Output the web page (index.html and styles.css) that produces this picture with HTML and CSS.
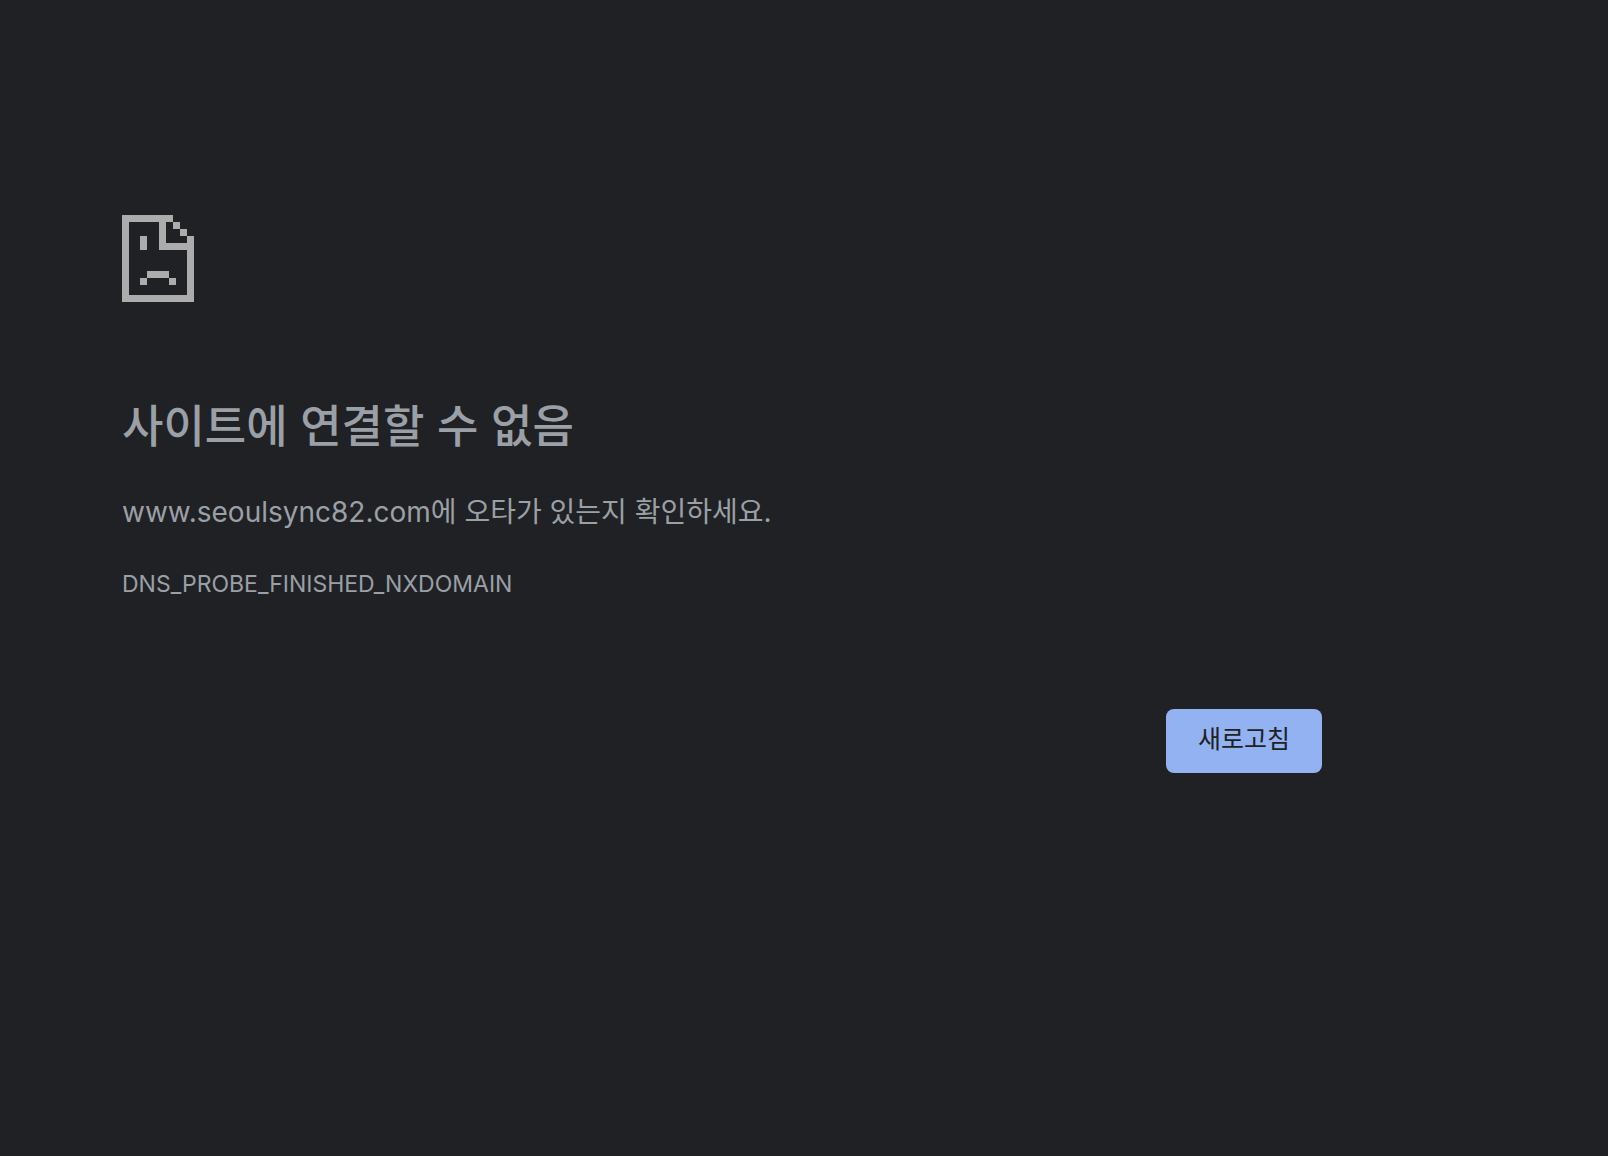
FILE: index.html
```html
<!DOCTYPE html>
<html lang="ko">
<head>
  <meta charset="UTF-8">
  <meta name="viewport" content="width=device-width, initial-scale=1.0">
  <title>www.seoulsync82.com</title>
  <link rel="stylesheet" href="styles.css">
</head>
<body>
  <main class="interstitial">
    <svg class="icon" viewBox="0 0 72 87" aria-hidden="true">
      <!-- page outline -->
      <path d="M0 0H51V7H44V28H65V21H72V87H0ZM7 7V80H65V35H37V7Z" fill-rule="evenodd"/>
      <!-- folded corner -->
      <path d="M51 7H58V14H51ZM58 14H65V21H58Z"/>
      <!-- face -->
      <path d="M18 21H25V35H18ZM25 56H47V63H25ZM18 63H25V70H18ZM47 63H54V70H47Z"/>
    </svg>
    <h1>사이트에 연결할 수 없음</h1>
    <p class="summary">www.seoulsync82.com에 오타가 있는지 확인하세요.</p>
    <p class="error-code">DNS_PROBE_FINISHED_NXDOMAIN</p>
    <div class="buttons">
      <button type="button" class="reload">새로고침</button>
    </div>
  </main>
</body>
</html>
```
FILE: styles.css
```css
body {
  margin: 0;
  background-color: #202124;
  color: #9aa0a6;
  font-family: Inter, "Noto Sans CJK KR", sans-serif;
}

.interstitial {
  max-width: 1200px;
  margin: 0 122px;
  padding-top: 215px;
}

.icon {
  display: block;
  width: 72px;
  height: 87px;
  fill: #acacac;
}

h1 {
  margin: 86px 0 28px;
  font-family: "Noto Sans CJK KR", sans-serif;
  font-size: 45px;
  font-weight: 500;
  line-height: 72px;
}

p {
  margin: 0;
}

.summary {
  font-size: 28px;
  line-height: 48px;
}

.error-code {
  margin-top: 30px;
  font-size: 23px;
  line-height: 36px;
}

.buttons {
  display: flex;
  justify-content: flex-end;
  margin-top: 107px;
}

.reload {
  height: 64px;
  padding: 0 32px 8px;
  border: 0;
  border-radius: 8px;
  background-color: #93b2f2;
  color: #202124;
  font-family: "Noto Sans CJK KR", sans-serif;
  font-size: 25px;
  cursor: pointer;
}
```
